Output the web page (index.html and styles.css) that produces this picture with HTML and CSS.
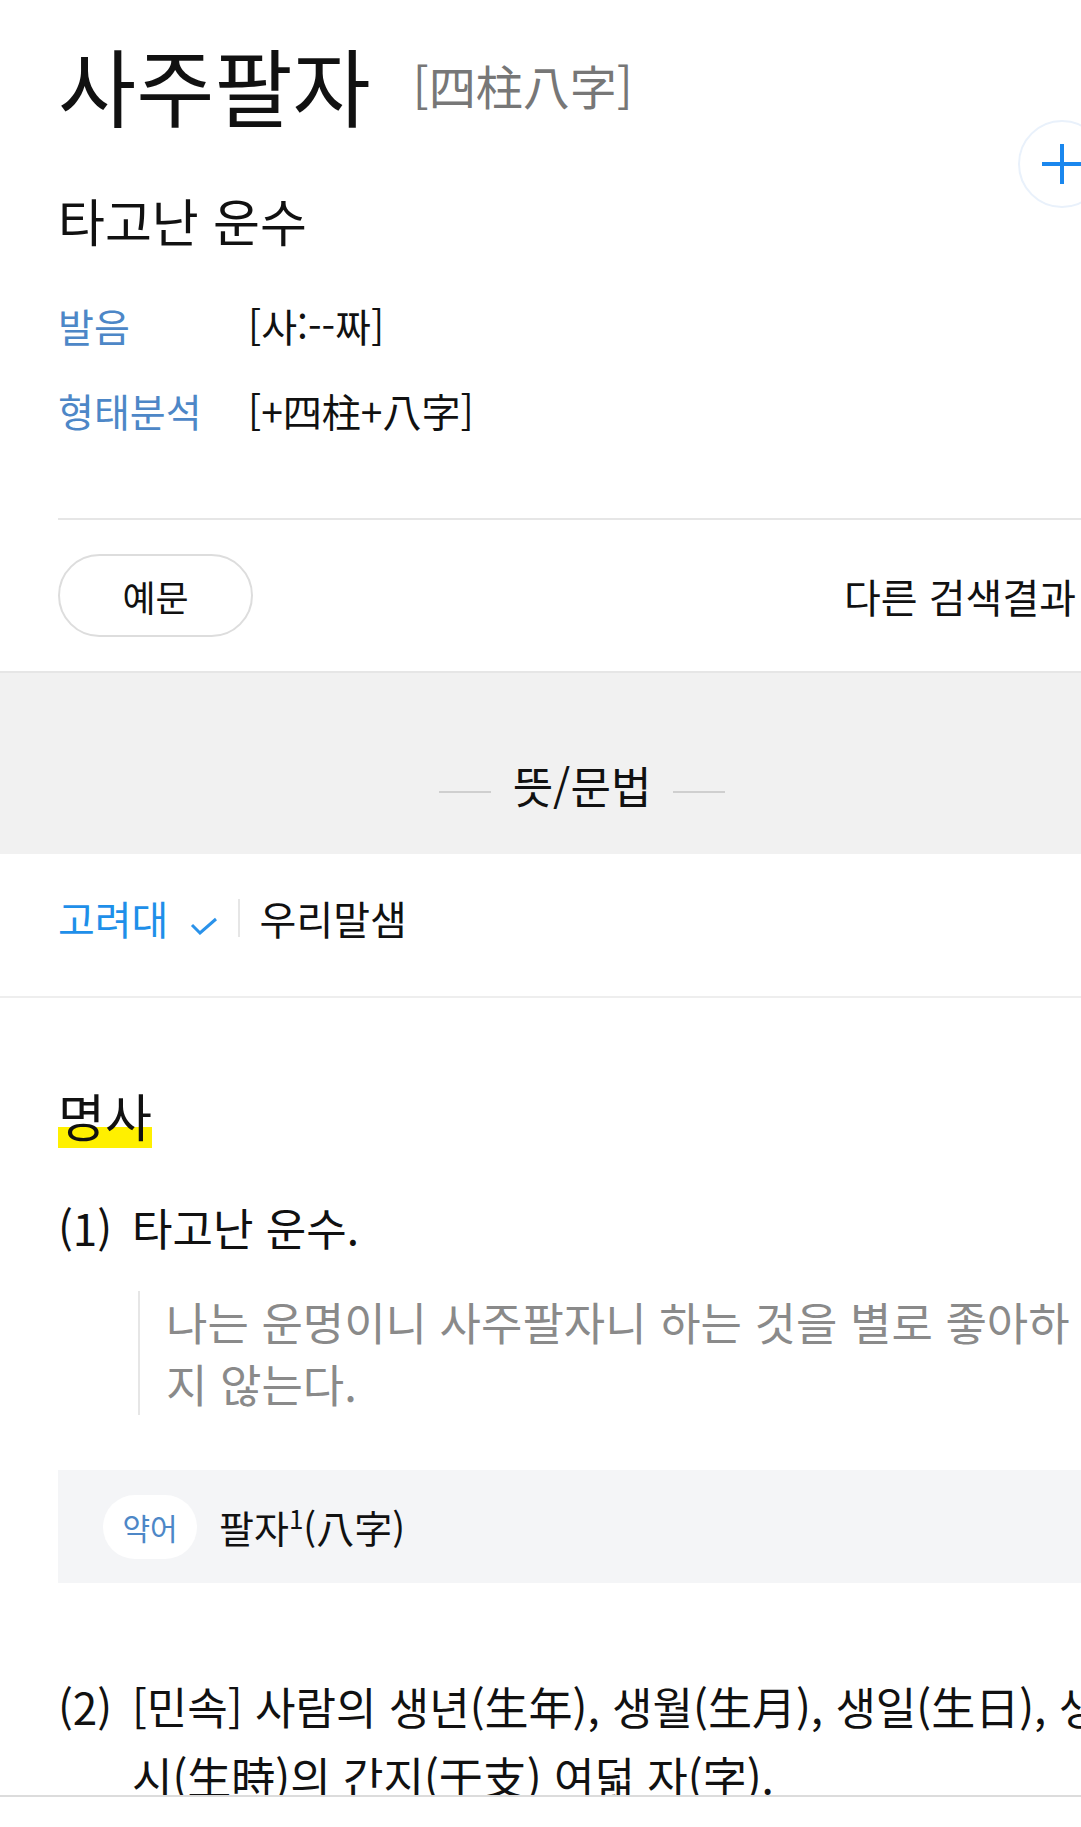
FILE: index.html
```html
<!DOCTYPE html>
<html lang="ko">
<head>
  <meta charset="UTF-8" />
  <title>사주팔자 - 사전</title>
  <meta name="viewport" content="width=device-width, initial-scale=1.0" />
  <link rel="stylesheet" href="styles.css">
</head>
<body>
  <div class="page">

    <!-- 표제어 -->
    <header class="entry">
      <div class="title-row">
        <h1 class="word">사주팔자</h1>
        <span class="hanja">[四柱八字]</span>
      </div>
      <p class="summary">타고난 운수</p>
      <button class="add-btn" aria-label="단어장 추가">
        <svg width="44" height="44" viewBox="0 0 44 44"><path d="M22 2v40M2 22h40" stroke="#1a87ee" stroke-width="4" fill="none"/></svg>
      </button>
      <dl class="info">
        <div class="info-row"><dt>발음</dt><dd>[사:--짜]</dd></div>
        <div class="info-row"><dt>형태분석</dt><dd>[+四柱+八字]</dd></div>
      </dl>
    </header>

    <div class="tools">
      <button class="pill">예문</button>
      <a class="other">다른 검색결과</a>
    </div>
  </div>

  <div class="section-head"><span>뜻/문법</span></div>

  <div class="page">
    <div class="dict-tabs">
      <span class="dict active">고려대
        <svg width="28" height="18" viewBox="0 0 28 18"><path d="M2 8l8 8L26 2" stroke="#2a92ea" stroke-width="3" fill="none"/></svg>
      </span>
      <span class="sep"></span>
      <span class="dict">우리말샘</span>
    </div>
  </div>

  <div class="page meaning">
    <h2 class="pos"><span>명사</span></h2>

    <div class="sense">
      <span class="num">(1)</span>
      <div class="sense-body">
        <p class="def">타고난 운수.</p>
        <blockquote class="example">나는 운명이니 사주팔자니 하는 것을 별로 좋아하지 않는다.</blockquote>
      </div>
    </div>

    <div class="related">
      <span class="tag">약어</span>
      <span class="rel-word">팔자<sup>1</sup>(八字)</span>
    </div>

    <div class="sense">
      <span class="num">(2)</span>
      <div class="sense-body">
        <p class="def">[민속] 사람의 생년(生年), 생월(生月), 생일(生日), 생시(生時)의 간지(干支) 여덟 자(字).</p>
      </div>
    </div>
  </div>

  <div class="bottom-bar"></div>
</body>
</html>
```

FILE: styles.css
```css
body {
  font-family: "Noto Sans CJK KR", "Noto Sans", sans-serif;
  background: #fff;
  color: #111;
  margin: 0;
  padding: 0;
  width: 1164px;
  overflow-x: hidden;
}
html {
  overflow-x: hidden;
}
.page {
  padding: 0 58px;
}
.entry {
  position: relative;
  padding-top: 33px;
  padding-bottom: 65px;
  border-bottom: 2px solid #e6e6e6;
}
.title-row {
  display: flex;
  align-items: center;
  gap: 42px;
}
.word {
  margin: 0;
  font-size: 85px;
  font-weight: 400;
  line-height: 1.2;
}
.hanja {
  font-size: 47px;
  color: #777;
}
.summary {
  margin: 52px 0 30px;
  font-size: 51px;
  line-height: 1.3;
}
.add-btn {
  position: absolute;
  right: 0;
  top: 120px;
  width: 88px;
  height: 88px;
  border-radius: 50%;
  border: 2px solid #e9f1fb;
  background: #fff;
  display: flex;
  align-items: center;
  justify-content: center;
  padding: 0;
}
.info {
  margin: 0;
}
.info-row {
  display: flex;
  font-size: 39px;
  line-height: 85px;
}
.info-row dt {
  width: 190px;
  color: #4d87c7;
}
.info-row dd {
  margin: 0;
}
.tools {
  display: flex;
  align-items: center;
  justify-content: space-between;
  padding: 34px 0;
}
.pill {
  width: 195px;
  height: 83px;
  border: 2px solid #dddddd;
  border-radius: 42px;
  background: #fff;
  font-family: inherit;
  font-size: 36px;
  color: #111;
}
.other {
  font-size: 40px;
  margin-right: 30px;
}
.section-head {
  background: #f1f1f1;
  border-top: 2px solid #e6e6e6;
  height: 183px;
  box-sizing: border-box;
  padding-top: 42px;
  display: flex;
  align-items: center;
  justify-content: center;
  font-size: 44px;
}
.section-head span::before,
.section-head span::after {
  content: "";
  display: inline-block;
  width: 52px;
  height: 2px;
  background: #cfcfcf;
  vertical-align: middle;
  margin: 0 22px;
}
.dict-tabs {
  display: flex;
  align-items: center;
  height: 142px;
  box-sizing: border-box;
  padding-bottom: 14px;
  font-size: 40px;
}
.dict.active {
  color: #1e8fe9;
}
.dict svg {
  margin-left: 10px;
}
.sep {
  width: 2px;
  height: 38px;
  background: #e6e6e6;
  margin: 0 20px;
}
.meaning {
  border-top: 2px solid #eeeeee;
  padding-top: 80px;
}
.pos {
  margin: 0 0 40px;
  font-size: 51px;
  font-weight: 400;
}
.pos span {
  background: linear-gradient(transparent 66%, #fff000 66%, #fff000 94%, transparent 94%);
}
.sense {
  display: flex;
  font-size: 44px;
  line-height: 70px;
}
.num {
  width: 74px;
  flex-shrink: 0;
}
.def {
  margin: 0;
}
.example {
  margin: 29px 0 0 6px;
  padding-left: 26px;
  border-left: 2px solid #e6e6e6;
  color: #8a8a8a;
  font-size: 45px;
  line-height: 62px;
}
.related {
  display: flex;
  align-items: center;
  background: #f4f5f7;
  margin: 55px -58px 88px 0;
  height: 113px;
  padding-left: 45px;
}
.tag {
  background: #fff;
  color: #4d87c7;
  font-size: 30px;
  width: 94px;
  height: 64px;
  border-radius: 32px;
  display: flex;
  align-items: center;
  justify-content: center;
  margin-right: 22px;
}
.rel-word {
  font-size: 38px;
}
.rel-word sup {
  font-size: 26px;
}
.bottom-bar {
  position: fixed;
  left: 0;
  right: 0;
  bottom: 0;
  height: 30px;
  background: #fff;
  border-top: 2px solid #dcdcdc;
}
```
